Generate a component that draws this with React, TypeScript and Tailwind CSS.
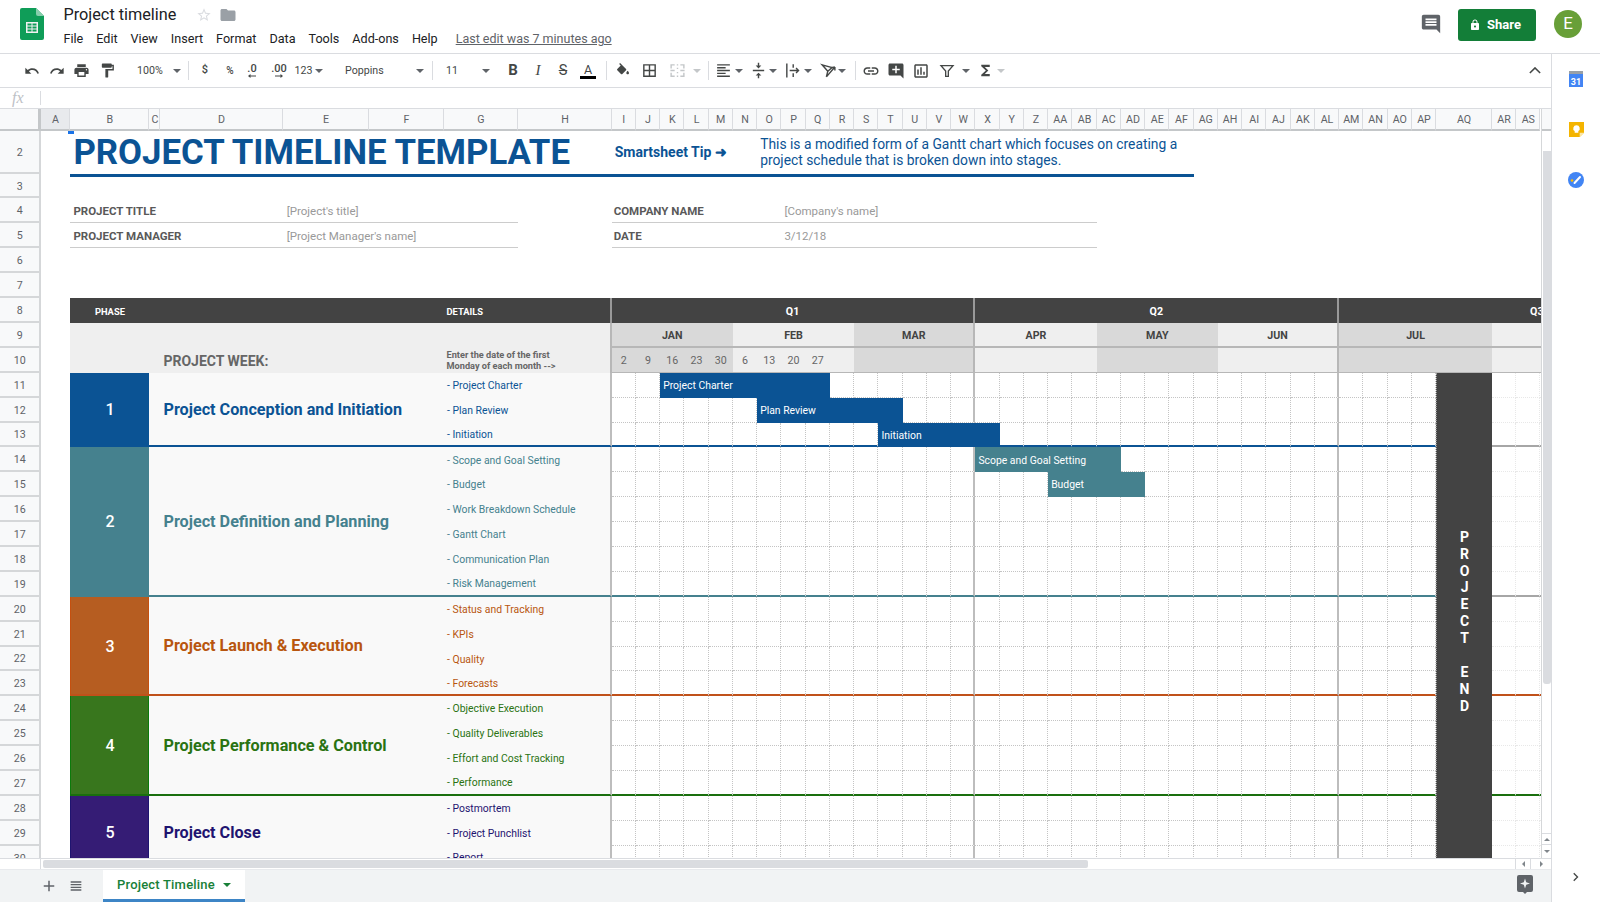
import React from 'react';

const names = ['A','B','C','D','E','F','G','H','I','J','K','L','M','N','O','P','Q','R','S','T','U','V','W','X','Y','Z','AA','AB','AC','AD','AE','AF','AG','AH','AI','AJ','AK','AL','AM','AN','AO','AP','AQ','AR','AS','AT','AU','AV','AW','AX','AY','AZ','BA'];
const col = (n: string) => names.indexOf(n) + 2;
const span = (from: string, to: string, r1: number, r2: number = r1): React.CSSProperties => ({
  gridColumn: `${col(from)} / ${col(to) + 1}`,
  gridRow: `${r1} / ${r2 + 1}`,
});
const ganttCols = names.slice(names.indexOf('I'));
const rowNums = Array.from({ length: 29 }, (_, i) => i + 2);

const phases = [
  { n: 1, title: 'Project Conception and Initiation', from: 11, to: 13, bg: 'bg-[#0b5394]', edge: 'border-x-[#0b5394]', text: 'text-[#0b5394]', line: 'border-b-[#0b5394]', after: 'border-b-[#a6a6a6]', details: ['- Project Charter', '- Plan Review', '- Initiation'] },
  { n: 2, title: 'Project Definition and Planning', from: 14, to: 19, bg: 'bg-[#45818e]', edge: 'border-x-[#45818e]', text: 'text-[#45818e]', line: 'border-b-[#45818e]', after: 'border-b-[#a6a6a6]', details: ['- Scope and Goal Setting', '- Budget', '- Work Breakdown Schedule', '- Gantt Chart', '- Communication Plan', '- Risk Management'] },
  { n: 3, title: 'Project Launch & Execution', from: 20, to: 23, bg: 'bg-[#b65d21]', edge: 'border-x-[#c5500f]', text: 'text-[#b8560f]', line: 'border-b-[#c0511a]', after: 'border-b-[#c0511a]', details: ['- Status and Tracking', '- KPIs', '- Quality', '- Forecasts'] },
  { n: 4, title: 'Project Performance & Control', from: 24, to: 27, bg: 'bg-[#38761d]', edge: 'border-x-[#0b7a0b]', text: 'text-[#2a7312]', line: 'border-b-[#1a6f0e]', after: 'border-b-[#1a6f0e]', details: ['- Objective Execution', '- Quality Deliverables', '- Effort and Cost Tracking', '- Performance'] },
  { n: 5, title: 'Project Close', from: 28, to: 30, bg: 'bg-[#351c75]', edge: 'border-x-[#1f1470]', text: 'text-[#1f1470]', line: 'border-b-transparent', after: 'border-b-transparent', details: ['- Postmortem', '- Project Punchlist', '- Report'] },
];

const months = [
  { name: 'JAN', from: 'I', to: 'M', bg: 'bg-[#d9d9d9]', edge: false },
  { name: 'FEB', from: 'N', to: 'R', bg: 'bg-[#efefef]', edge: false },
  { name: 'MAR', from: 'S', to: 'W', bg: 'bg-[#d9d9d9]', edge: true },
  { name: 'APR', from: 'X', to: 'AB', bg: 'bg-[#efefef]', edge: false },
  { name: 'MAY', from: 'AC', to: 'AG', bg: 'bg-[#d9d9d9]', edge: false },
  { name: 'JUN', from: 'AH', to: 'AL', bg: 'bg-[#efefef]', edge: true },
  { name: 'JUL', from: 'AM', to: 'AQ', bg: 'bg-[#d9d9d9]', edge: false },
  { name: '', from: 'AR', to: 'BA', bg: 'bg-[#efefef]', edge: false },
];

const weeks = [['I', '2'], ['J', '9'], ['K', '16'], ['L', '23'], ['M', '30'], ['N', '6'], ['O', '13'], ['P', '20'], ['Q', '27']];

const bars = [
  { label: 'Project Charter', from: 'K', to: 'Q', row: 11, bg: 'bg-[#0b5394]' },
  { label: 'Plan Review', from: 'O', to: 'T', row: 12, bg: 'bg-[#0b5394]' },
  { label: 'Initiation', from: 'T', to: 'X', row: 13, bg: 'bg-[#0b5394]' },
  { label: 'Scope and Goal Setting', from: 'X', to: 'AC', row: 14, bg: 'bg-[#45818e]' },
  { label: 'Budget', from: 'AA', to: 'AD', row: 15, bg: 'bg-[#45818e]' },
];

const Ico = ({ d, className }: { d: string; className?: string }) => (
  <svg viewBox="0 0 24 24" fill="currentColor" className={className}>
    <path d={d} />
  </svg>
);

const Caret = ({ dim }: { dim?: boolean }) => (
  <svg viewBox="0 0 8 4" className={`h-[4px] w-[8px] ${dim ? 'text-[#c4c7c9]' : 'text-[#5f6368]'}`} fill="currentColor">
    <path d="M0 0h8L4 4z" />
  </svg>
);

const Sep = () => <div className="h-[19px] w-px shrink-0 bg-[#dadce0]" />;

const icons = {
  undo: 'M12.5 8c-2.65 0-5.05.99-6.9 2.6L2 7v9h9l-3.62-3.62c1.39-1.16 3.16-1.88 5.12-1.88 3.54 0 6.55 2.31 7.6 5.5l2.37-.78C21.08 11.03 17.15 8 12.5 8z',
  redo: 'M18.4 10.6C16.55 8.99 14.15 8 11.5 8c-4.65 0-8.58 3.03-9.96 7.22L3.9 16c1.05-3.19 4.05-5.5 7.6-5.5 1.95 0 3.73.72 5.12 1.88L13 16h9V7l-3.6 3.6z',
  print: 'M19 8H5c-1.66 0-3 1.34-3 3v6h4v4h12v-4h4v-6c0-1.66-1.34-3-3-3zm-3 11H8v-5h8v5zm3-7c-.55 0-1-.45-1-1s.45-1 1-1 1 .45 1 1-.45 1-1 1zm-1-9H6v4h12V3z',
  paint: 'M18 4V3c0-.55-.45-1-1-1H5c-.55 0-1 .45-1 1v4c0 .55.45 1 1 1h12c.55 0 1-.45 1-1V6h1v4H9v11c0 .55.45 1 1 1h2c.55 0 1-.45 1-1v-9h8V4h-3z',
  fill: 'M16.56 8.94L7.62 0 6.21 1.41l2.38 2.38-5.15 5.15c-.59.59-.59 1.54 0 2.12l5.5 5.5c.29.29.68.44 1.06.44s.77-.15 1.06-.44l5.5-5.5c.59-.58.59-1.53 0-2.12zM19 11.5s-2 2.17-2 3.5c0 1.1.9 2 2 2s2-.9 2-2c0-1.33-2-3.5-2-3.5z',
  borders: 'M3 3v18h18V3H3zm8 16H5v-6h6v6zm0-8H5V5h6v6zm8 8h-6v-6h6v6zm0-8h-6V5h6v6z',
  align: 'M15 15H3v2h12v-2zm0-8H3v2h12V7zM3 13h18v-2H3v2zm0 8h18v-2H3v2zM3 3v2h18V3H3z',
  valign: 'M8 19h3v4h2v-4h3l-4-4-4 4zm8-14h-3V1h-2v4H8l4 4 4-4zM4 11v2h16v-2H4z',
  link: 'M3.9 12c0-1.71 1.39-3.1 3.1-3.1h4V7H7c-2.76 0-5 2.24-5 5s2.24 5 5 5h4v-1.9H7c-1.71 0-3.1-1.39-3.1-3.1zM8 13h8v-2H8v2zm9-6h-4v1.9h4c1.71 0 3.1 1.39 3.1 3.1s-1.39 3.1-3.1 3.1h-4V17h4c2.76 0 5-2.24 5-5s-2.24-5-5-5z',
  addComment: 'M22 4c0-1.1-.9-2-2-2H4c-1.1 0-2 .9-2 2v12c0 1.1.9 2 2 2h14l4 4V4zm-5 7h-4v4h-2v-4H7V9h4V5h2v4h4v2z',
  chart: 'M9 17H7v-7h2v7zm4 0h-2V7h2v10zm4 0h-2v-4h2v4zm2 2H5V5h14v14zm0-16H5c-1.1 0-2 .9-2 2v14c0 1.1.9 2 2 2h14c1.1 0 2-.9 2-2V5c0-1.1-.9-2-2-2z',
  sigma: 'M18 4H6v2l6.5 6L6 18v2h12v-3h-7l5-5-5-5h7z',
  chat: 'M20 2H4c-1.1 0-2 .9-2 2v12c0 1.1.9 2 2 2h14l4 4V4c0-1.1-.9-2-2-2zm-2 12H6v-2h12v2zm0-3H6V9h12v2zm0-3H6V6h12v2z',
  lock: 'M18 8h-1V6c0-2.76-2.24-5-5-5S7 3.24 7 6v2H6c-1.1 0-2 .9-2 2v10c0 1.1.9 2 2 2h12c1.1 0 2-.9 2-2V10c0-1.1-.9-2-2-2zm-6 9c-1.1 0-2-.9-2-2s.9-2 2-2 2 .9 2 2-.9 2-2 2zm3.1-9H8.9V6c0-1.71 1.39-3.1 3.1-3.1 1.71 0 3.1 1.39 3.1 3.1v2z',
  folder: 'M10 4H4c-1.1 0-1.99.9-1.99 2L2 18c0 1.1.9 2 2 2h16c1.1 0 2-.9 2-2V8c0-1.1-.9-2-2-2h-8l-2-2z',
  star: 'M22 9.24l-7.19-.62L12 2 9.19 8.63 2 9.24l5.46 4.73L5.82 21 12 17.27 18.18 21l-1.63-7.03L22 9.24zM12 15.4l-3.76 2.27 1-4.28-3.32-2.88 4.38-.38L12 6.1l1.71 4.04 4.38.38-3.32 2.88 1 4.28L12 15.4z',
  plus: 'M19 13h-6v6h-2v-6H5v-2h6V5h2v6h6v2z',
  list: 'M4 5h16v2H4zM4 9h16v2H4zM4 13h16v2H4zM4 17h16v2H4z',
};

const SheetsLogo = () => (
  <svg viewBox="0 0 24 32" className="h-[32px] w-[24px]">
    <path d="M2 0h14l8 8v22a2 2 0 0 1-2 2H2a2 2 0 0 1-2-2V2a2 2 0 0 1 2-2z" fill="#0f9d58" />
    <path d="M16 0l8 8h-6a2 2 0 0 1-2-2z" fill="#87ceac" />
    <path d="M6 14h12v11H6z" fill="#f1f1f1" />
    <path d="M7.5 15.5h4v2h-4zM12.5 15.5h4v2h-4zM7.5 18.5h4v2h-4zM12.5 18.5h4v2h-4zM7.5 21.5h4v2h-4zM12.5 21.5h4v2h-4z" fill="#0f9d58" />
  </svg>
);

const TitleBar = () => (
  <div className="flex h-[54px] shrink-0 border-b border-[#dadce0] bg-white">
    <div className="flex w-[63.5px] shrink-0 pl-[20px] pt-[8px]">
      <SheetsLogo />
    </div>
    <div className="flex flex-col">
      <div className="flex h-[28px] items-center pt-[2px]">
        <span className="w-[132px] text-[16.25px] leading-none text-[#202124]">Project timeline</span>
        <Ico d={icons.star} className="h-[16px] w-[16px] text-[#dadce0]" />
        <Ico d={icons.folder} className="ml-[7px] h-[18px] w-[18px] text-[#9aa0a6]" />
      </div>
      <div className="mt-[2px] flex items-center gap-[13px] text-[12.6px] leading-[18px] text-[#202124]">
        {['File', 'Edit', 'View', 'Insert', 'Format', 'Data', 'Tools', 'Add-ons', 'Help'].map((m) => (
          <span key={m}>{m}</span>
        ))}
        <span className="ml-[5px] text-[12.5px] text-[#5f6368] underline">Last edit was 7 minutes ago</span>
      </div>
    </div>
    <div className="ml-auto flex items-start">
      <Ico d={icons.chat} className="mt-[13px] h-[22px] w-[22px] text-[#5f6368]" />
      <button type="button" className="ml-[16px] mt-[9px] flex h-[32px] w-[78px] items-center gap-[6px] rounded-[3px] bg-[#137e38] pb-px pl-[11px] text-[13px] font-bold text-white">
        <Ico d={icons.lock} className="h-[12px] w-[12px]" />
        Share
      </button>
      <div className="ml-[18px] mr-[18px] mt-[10px] flex h-[28px] w-[28px] items-center justify-center rounded-full bg-[#689f38] text-[17px] text-white">E</div>
    </div>
  </div>
);

const Tool = ({ className, children }: { className: string; children?: React.ReactNode }) => (
  <div className={`flex shrink-0 items-center justify-center ${className}`}>{children}</div>
);

const DecimalTool = ({ label, flip }: { label: string; flip?: boolean }) => (
  <span className="flex flex-col items-center text-[11px] font-medium leading-[11px]">
    {label}
    <svg viewBox="0 0 8 4" className={`h-[4px] w-[8px] ${flip ? 'rotate-180' : ''}`} fill="currentColor">
      <path d="M0 2l2.500-2v1.500H8v1H2.500V4z" />
    </svg>
  </span>
);

const Toolbar = () => (
  <div className="flex h-[34px] shrink-0 items-center border-b border-[#dadce0] pl-[19px] text-[#444746]">
    <Tool className="w-[25px]"><Ico d={icons.undo} className="h-[16px] w-[16px]" /></Tool>
    <Tool className="w-[25px]"><Ico d={icons.redo} className="h-[16px] w-[16px]" /></Tool>
    <Tool className="w-[25px]"><Ico d={icons.print} className="h-[17px] w-[17px]" /></Tool>
    <Tool className="w-[26px]"><Ico d={icons.paint} className="h-[17px] w-[17px]" /></Tool>
    <Tool className="w-[45px] justify-start! pl-[17px] text-[10.67px]">100%</Tool>
    <Tool className="w-[23px]"><Caret /></Tool>
    <Sep />
    <Tool className="w-[32px] text-[11px] font-medium">$</Tool>
    <Tool className="w-[18px] text-[10px] font-medium">%</Tool>
    <Tool className="w-[26px]"><DecimalTool label=".0" /></Tool>
    <Tool className="w-[28px]"><DecimalTool label=".00" flip /></Tool>
    <Tool className="w-[21px] text-[10.67px]">123</Tool>
    <Tool className="w-[10px]"><Caret /></Tool>
    <Tool className="w-[86px] justify-start! pl-[21px] text-[10.67px]">Poppins</Tool>
    <Tool className="w-[20px]"><Caret /></Tool>
    <div className="ml-[2px]"><Sep /></div>
    <Tool className="w-[43px] justify-start! pl-[13px] text-[10.67px]">11</Tool>
    <Tool className="w-[20px]"><Caret /></Tool>
    <Tool className="w-[34px] text-[15px] font-bold">B</Tool>
    <Tool className="w-[16px] font-['Liberation_Serif',serif] text-[15px] italic">I</Tool>
    <Tool className="w-[34px] text-[14.500px] line-through">S</Tool>
    <Tool className="w-[16px]">
      <span className="flex flex-col items-center text-[12.500px] leading-[13px]">A<span className="block h-[3px] w-[16px] bg-black" /></span>
    </Tool>
    <div className="ml-[10px]"><Sep /></div>
    <Tool className="w-[32px]"><Ico d={icons.fill} className="h-[16px] w-[16px]" /></Tool>
    <Tool className="w-[20px]"><Ico d={icons.borders} className="h-[17px] w-[17px]" /></Tool>
    <Tool className="ml-[4px] w-[28px]">
      <svg viewBox="0 0 24 24" className="h-[17px] w-[17px] text-[#c4c7c9]" fill="none" stroke="currentColor" strokeWidth="2">
        <path d="M3 9V4h5M11 4h2M16 4h5v5M3 15v5h5M11 20h2M16 20h5v-5M2 12h6M16 12h6M12 8v2M12 14v2" />
      </svg>
    </Tool>
    <Tool className="w-[12px]"><Caret dim /></Tool>
    <div className="ml-[5px]"><Sep /></div>
    <Tool className="ml-[2px] w-[24px]"><Ico d={icons.align} className="h-[17px] w-[17px]" /></Tool>
    <Tool className="w-[8px]"><Caret /></Tool>
    <Tool className="ml-[4px] w-[22px]"><Ico d={icons.valign} className="h-[17px] w-[17px]" /></Tool>
    <Tool className="w-[8px]"><Caret /></Tool>
    <Tool className="ml-[4px] w-[23px]">
      <svg viewBox="0 0 24 24" className="h-[17px] w-[17px]" fill="none" stroke="currentColor" strokeWidth="2">
        <path d="M4 2v20M13 3v5M13 16v5M8 12h12M17 8.500l3.500 3.500-3.500 3.500" />
      </svg>
    </Tool>
    <Tool className="w-[8px]"><Caret /></Tool>
    <Tool className="ml-[7px] w-[18px]">
      <svg viewBox="0 0 24 24" className="h-[17px] w-[17px]" fill="none" stroke="currentColor" strokeWidth="2">
        <path d="M3 4l14 4-6 5zM11 13l-2 8M9 21L21 7M21 7l-5 1M21 7v5" />
      </svg>
    </Tool>
    <Tool className="w-[10px]"><Caret /></Tool>
    <div className="ml-[8px]"><Sep /></div>
    <Tool className="w-[30px]"><Ico d={icons.link} className="h-[18px] w-[18px]" /></Tool>
    <Tool className="w-[20px]"><Ico d={icons.addComment} className="h-[18px] w-[18px]" /></Tool>
    <Tool className="w-[30px]"><Ico d={icons.chart} className="h-[18px] w-[18px]" /></Tool>
    <Tool className="w-[22px]">
      <svg viewBox="0 0 24 24" className="h-[16px] w-[16px]" fill="none" stroke="currentColor" strokeWidth="2">
        <path d="M3 4h18l-7 8v8h-4v-8z" />
      </svg>
    </Tool>
    <Tool className="w-[16px]"><Caret /></Tool>
    <Tool className="w-[22px]"><Ico d={icons.sigma} className="h-[17px] w-[17px]" /></Tool>
    <Tool className="w-[10px]"><Caret dim /></Tool>
    <div className="ml-auto mr-[9px] flex w-[14px] justify-center">
      <svg viewBox="0 0 14 8" className="h-[7px] w-[12px]" fill="none" stroke="#444746" strokeWidth="1.800">
        <path d="M1 7l6-6 6 6" />
      </svg>
    </div>
  </div>
);

const FormulaBar = () => (
  <div className="flex h-[21px] shrink-0 items-center border-b border-[#dadce0]">
    <span className="w-[40px] pl-[12px] font-['Liberation_Serif',serif] text-[16px] italic text-[#bdc1c6]">fx</span>
    <div className="h-[14px] w-px bg-[#dadce0]" />
  </div>
);

const Sheet = () => (
  <div className="h-[749px] w-[1541px] shrink-0 overflow-hidden">
    <div className="relative grid grid-cols-[40.7px_29.7px_79.1px_11px_122.2px_86.6px_74.3px_74.8px_93.3px_repeat(34,24.25px)_55.8px_repeat(10,24.25px)] grid-rows-[22px_42.6px_repeat(28,24.9px)] bg-white text-[#5f6368]">
      {/* corner and headers */}
      <div className="col-start-1 row-start-1 border-b-2 border-r-[3px] border-[#c4c7c9] bg-[#f8f9fa]" />
      {names.slice(0, 45).map((n, i) => (
        <div
          key={n}
          className={`flex items-center justify-center border-b-2 border-r border-b-[#c4c7c9] border-r-[#dadce0] pl-px pt-px text-[10.67px] ${n === 'A' ? 'bg-[#e8eaed]' : 'bg-[#f8f9fa]'}`}
          style={{ gridColumn: i + 2, gridRow: 1 }}
        >
          {n}
        </div>
      ))}
      {rowNums.map((r) => (
        <div
          key={r}
          className="flex items-center justify-center border-b-2 border-r-2 border-[#d5d7d9] bg-[#f8f9fa] pl-px pt-[3px] text-[10.67px]"
          style={{ gridColumn: 1, gridRow: r }}
        >
          {r}
        </div>
      ))}

      {/* title row */}
      <div className="flex items-center pl-[3px] pt-[1px]" style={span('B', 'H', 2)}>
        <h1 className="whitespace-nowrap text-[34.800px] font-bold leading-none text-[#0b5394]">PROJECT TIMELINE TEMPLATE</h1>
      </div>
      <div className="flex items-center pl-[3px] pt-[1px] text-[14px] font-bold text-[#0b5394]" style={span('I', 'N', 2)}>
        <span className="whitespace-nowrap">Smartsheet Tip ➜</span>
      </div>
      <div className="flex items-center pl-[3px] text-[13.850px] leading-[16.500px] text-[#0b5394]" style={span('O', 'AF', 2)}>
        <p>
          This is a modified form of a Gantt chart which focuses on creating a
          <br />
          project schedule that is broken down into stages.
        </p>
      </div>
      <div className="border-t-[3px] border-[#0b5394]" style={span('B', 'AF', 3)} />

      {/* project info */}
      {[
        { row: 4, a: 'PROJECT TITLE', b: "[Project's title]", c: 'COMPANY NAME', d: "[Company's name]" },
        { row: 5, a: 'PROJECT MANAGER', b: "[Project Manager's name]", c: 'DATE', d: '3/12/18' },
      ].map((i) => (
        <React.Fragment key={i.row}>
          <div className="flex items-center border-b border-[#cccccc] pl-[3px] pt-[2px] text-[11.500px] font-bold text-[#595959]" style={span('B', 'D', i.row)}>{i.a}</div>
          <div className="flex items-center border-b border-[#cccccc] pl-[4px] pt-[2px] text-[11.500px] text-[#999999]" style={span('E', 'G', i.row)}>{i.b}</div>
          <div className="flex items-center border-b border-[#cccccc] pl-[2px] pt-[2px] text-[11.500px] font-bold text-[#595959]" style={span('I', 'O', i.row)}>{i.c}</div>
          <div className="flex items-center border-b border-[#cccccc] pl-[3px] pt-[2px] text-[11.500px] text-[#999999]" style={span('P', 'AB', i.row)}>{i.d}</div>
        </React.Fragment>
      ))}

      {/* dark header */}
      <div className="flex items-center justify-center bg-[#434343] pt-[3px] text-[9.33px] font-bold text-white" style={span('B', 'B', 8)}>PHASE</div>
      <div className="bg-[#434343]" style={span('C', 'F', 8)} />
      <div className="flex items-center border-r-2 border-[#999999] bg-[#434343] pl-[3px] pt-[3px] text-[9.33px] font-bold text-white" style={span('G', 'H', 8)}>DETAILS</div>
      <div className="flex items-center justify-center border-r-2 border-[#999999] bg-[#434343] pt-[3px] text-[10.67px] font-bold text-white" style={span('I', 'W', 8)}>Q1</div>
      <div className="flex items-center justify-center border-r-2 border-[#999999] bg-[#434343] pt-[3px] text-[10.67px] font-bold text-white" style={span('X', 'AL', 8)}>Q2</div>
      <div className="flex items-center justify-center bg-[#434343] pt-[3px] text-[10.67px] font-bold text-white" style={span('AM', 'BA', 8)}>Q3</div>

      {/* project week */}
      <div className="bg-[#efefef]" style={span('B', 'C', 9, 10)} />
      <div className="flex items-end bg-[#efefef] pb-[1px] pl-[3px] text-[14px] font-bold text-[#666666]" style={span('D', 'F', 9, 10)}>PROJECT WEEK:</div>
      <div className="flex items-end border-r-2 border-[#b7b7b7] bg-[#efefef] pb-[1.500px] pl-[3px] text-[9.200px] font-bold leading-[10.500px] text-[#666666]" style={span('G', 'H', 9, 10)}>
        <p>
          Enter the date of the first
          <br />
          Monday of each month --&gt;
        </p>
      </div>
      {months.map((m) => (
        <React.Fragment key={m.from}>
          <div className={`flex items-center justify-center border-b-2 border-[#b7b7b7] pt-[3px] text-[10.67px] font-bold text-[#434343] ${m.bg} ${m.edge ? 'border-r-2' : ''}`} style={span(m.from, m.to, 9)}>{m.name}</div>
          <div className={`border-b border-[#b7b7b7] ${m.bg} ${m.edge ? 'border-r-2' : ''}`} style={span(m.from, m.to, 10)} />
        </React.Fragment>
      ))}
      {weeks.map(([c, w]) => (
        <div key={c} className="flex items-center justify-center pt-px text-[10.67px] text-[#666666]" style={span(c, c, 10)}>{w}</div>
      ))}

      {/* phases */}
      {phases.map((p) => (
        <React.Fragment key={p.n}>
          <div className={`flex items-center justify-center border-x border-b-2 pt-[2px] text-[16px] font-medium text-white ${p.bg} ${p.edge} ${p.line}`} style={span('B', 'B', p.from, p.to)}>{p.n}</div>
          <div className={`flex items-center border-b-2 bg-[#f9f9f9] pl-[14px] pt-[2px] text-[16.200px] font-bold ${p.text} ${p.line}`} style={span('C', 'F', p.from, p.to)}>{p.title}</div>
          {p.details.map((d, i) => (
            <div
              key={d}
              className={`flex items-center border-r-2 border-r-[#bdbdbd] bg-[#f9f9f9] pl-[3.500px] pt-px text-[10.400px] ${p.text} ${i === p.details.length - 1 ? `border-b-2 ${p.line}` : ''}`}
              style={span('G', 'H', p.from + i)}
            >
              {d}
            </div>
          ))}
          {Array.from({ length: p.to - p.from + 1 }, (_, i) => p.from + i).flatMap((r) =>
            ganttCols.filter((c) => c !== 'AQ').map((c) => {
              const after = names.indexOf(c) > names.indexOf('AQ');
              const boundary = c === 'W' || c === 'AL';
              const last = r === p.to;
              return (
                <div
                  key={`${r}-${c}`}
                  className={`${boundary ? 'border-r-2 border-solid border-r-[#bdbdbd]' : `border-r border-dotted ${after ? 'border-r-[#e8e8e8]' : 'border-r-[#c4c4c4]'}`} ${
                    last
                      ? `border-b-2 [border-bottom-style:solid] ${after ? p.after : p.line}`
                      : `border-b [border-bottom-style:dotted] ${after ? 'border-b-[#e8e8e8]' : 'border-b-[#c4c4c4]'}`
                  }`}
                  style={span(c, c, r)}
                />
              );
            })
          )}
        </React.Fragment>
      ))}

      {/* bars */}
      {bars.map((b) => (
        <div
          key={b.label}
          className={`flex items-center whitespace-nowrap pl-[3px] pt-px text-[10.400px] text-white ${b.bg}`}
          style={span(b.from, b.to, b.row)}
        >
          {b.label}
        </div>
      ))}

      {/* project end column */}
      <div className="flex flex-col items-center justify-center border-l border-dotted border-l-[#999999] bg-[#434343] text-[14px] font-bold leading-[16.900px] text-white" style={span('AQ', 'AQ', 11, 30)}>
        {'PROJECT END'.split('').map((ch, i) => (
          <span key={i} className="h-[16.900px]">{ch === ' ' ? '\u00a0' : ch}</span>
        ))}
      </div>

      {/* selection marker */}
      <div className="absolute left-[68px] top-[22px] h-[3px] w-[6px] bg-[#1a73e8]" />
    </div>
  </div>
);

const VScroll = () => (
  <div className="flex h-[749px] w-[10px] shrink-0 flex-col border-l border-[#d5d7d9]">
    <div className="h-[22px] border-b-2 border-[#c4c7c9] bg-[#f8f9fa]" />
    <div className="ml-px mt-[20px] h-[533px] w-[8px] rounded-b-[3px] bg-[#dadce0]" />
    <div className="mt-auto flex h-[12px] items-center justify-center border-y border-[#dadce0]">
      <svg viewBox="0 0 6 3" className="h-[3px] w-[6px] text-[#80868b]" fill="currentColor"><path d="M0 3h6L3 0z" /></svg>
    </div>
    <div className="flex h-[13px] items-center justify-center">
      <svg viewBox="0 0 6 3" className="h-[3px] w-[6px] text-[#80868b]" fill="currentColor"><path d="M0 0h6L3 3z" /></svg>
    </div>
  </div>
);

const HScroll = () => (
  <div className="flex h-[11px] shrink-0 items-center border-t border-[#dadce0]">
    <div className="h-full w-[41px] border-r border-[#dadce0]" />
    <div className="ml-[2px] h-[8px] w-[1045px] rounded-[2px] bg-[#dadce0]" />
    <div className="ml-auto flex h-full">
      <div className="flex w-[15px] items-center justify-center border-l border-[#dadce0]">
        <svg viewBox="0 0 3 6" className="h-[6px] w-[3px] text-[#80868b]" fill="currentColor"><path d="M3 0v6L0 3z" /></svg>
      </div>
      <div className="flex w-[21px] items-center justify-center border-l border-[#dadce0]">
        <svg viewBox="0 0 3 6" className="h-[6px] w-[3px] text-[#80868b]" fill="currentColor"><path d="M0 0v6l3-3z" /></svg>
      </div>
    </div>
  </div>
);

const TabBar = () => (
  <div className="flex h-[34px] shrink-0 items-start border-t border-[#e8eaed] bg-[#f1f3f4] text-[#5f6368]">
    <div className="flex h-full w-[103px] items-center pb-[2px] pl-[40px]">
      <Ico d={icons.plus} className="h-[18px] w-[18px]" />
      <Ico d={icons.list} className="ml-[10px] h-[16px] w-[16px]" />
    </div>
    <div className="flex h-full w-[142px] items-center border-b-[4px] border-[#3d85c6] bg-white pl-[14px] text-[13px] font-medium text-[#188038]">
      <span className="tracking-[0.2px]">Project Timeline</span>
      <span className="ml-[8px] text-[#188038]">
        <svg viewBox="0 0 8 4" className="h-[4px] w-[8px]" fill="currentColor"><path d="M0 0h8L4 4z" /></svg>
      </span>
    </div>
    <div className="ml-auto mr-[18px] mt-[5px]">
      <svg viewBox="0 0 16 19" className="h-[19px] w-[16px] text-[#5f6368]" fill="currentColor">
        <path fillRule="evenodd" d="M2 0h12a2 2 0 0 1 2 2v13a2 2 0 0 1-2 2h-4l-2 2-2-2H2a2 2 0 0 1-2-2V2a2 2 0 0 1 2-2zm6 3.500L6.800 7.300 3 8.500l3.800 1.200L8 13.500l1.200-3.800L13 8.500 9.200 7.300z" />
      </svg>
    </div>
  </div>
);

const SidePanel = () => (
  <div className="flex w-[49px] shrink-0 flex-col items-center border-l border-[#dadce0] bg-white pt-[17px]">
    <svg viewBox="0 0 14 16" className="h-[16px] w-[14px]">
      <path d="M0 0h14v16H0z" fill="#4285f4" />
      <path d="M0 0h14v3H0z" fill="#9aa0a6" />
      <text x="7" y="13.500" textAnchor="middle" fontSize="9" fontWeight="700" fill="#ffffff" fontFamily="Roboto, sans-serif">31</text>
    </svg>
    <svg viewBox="0 0 14 14" className="mt-[35px] h-[15px] w-[15px]">
      <path d="M0 0h14v10l-4 4H0z" fill="#f4b400" />
      <path d="M10 14v-4h4z" fill="#fbe7a8" />
      <path d="M7 3a3 3 0 0 0-1.700 5.500V10h3.400V8.500A3 3 0 0 0 7 3z" fill="#ffffff" />
    </svg>
    <svg viewBox="0 0 16 16" className="mt-[35px] h-[16px] w-[16px]">
      <circle cx="8" cy="8" r="8" fill="#4285f4" />
      <path d="M6.500 11L12 5" stroke="#ffffff" strokeWidth="2" strokeLinecap="round" />
      <circle cx="4" cy="8.500" r="1.300" fill="#fbbc04" />
    </svg>
    <svg viewBox="0 0 8 12" className="mb-[20px] mt-auto h-[10px] w-[6px]" fill="none" stroke="#444746" strokeWidth="1.800">
      <path d="M1 1l5 5-5 5" />
    </svg>
  </div>
);

export default function App() {
  return (
    <div className="flex h-[902px] w-[1600px] flex-col overflow-hidden bg-white font-[Roboto,sans-serif]">
      <TitleBar />
      <div className="flex min-h-0 flex-1">
        <div className="flex w-[1551px] shrink-0 flex-col">
          <Toolbar />
          <FormulaBar />
          <div className="flex">
            <Sheet />
            <VScroll />
          </div>
          <HScroll />
          <TabBar />
        </div>
        <SidePanel />
      </div>
    </div>
  );
}
